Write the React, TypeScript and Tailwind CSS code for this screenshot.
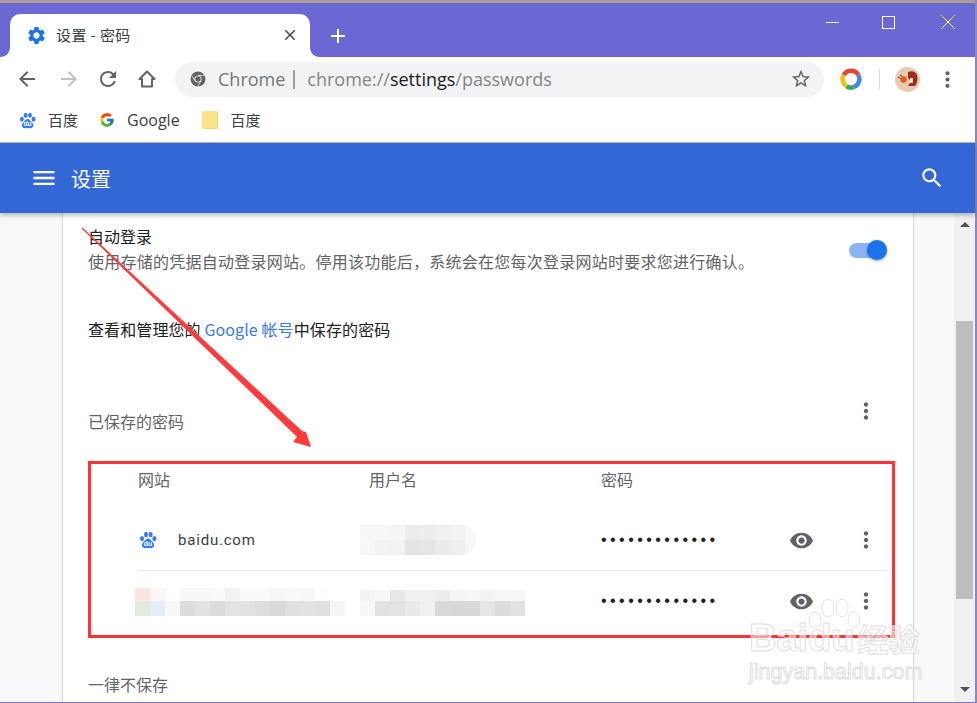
import React from "react";
import {
  MdSettings, MdClose, MdAdd, MdArrowBack, MdArrowForward, MdRefresh,
  MdStarBorder, MdMoreVert, MdMenu, MdSearch, MdVisibility,
} from "react-icons/md";
import { FcGoogle } from "react-icons/fc";

const SANS = "font-['Noto_Sans_CJK_SC','Noto_Sans',sans-serif]";

function Paw({ size = 18 }: { size?: number }) {
  return (
    <svg width={size} height={size} viewBox="0 0 18 18" className="shrink-0">
      <g fill="#2f7cf6">
        <ellipse cx="3" cy="7.6" rx="2" ry="2.6" />
        <ellipse cx="7" cy="3.4" rx="2" ry="2.7" />
        <ellipse cx="11.6" cy="3.4" rx="2" ry="2.7" />
        <ellipse cx="15.4" cy="7.6" rx="2" ry="2.6" />
        <path d="M9 7.4c2 0 3 2 4.2 3.2 1.4 1.3 2.4 2.4 1.7 4.4-.6 1.9-2.6 2.4-4 2.1-1.300-.3-2.500-.3-3.800 0-1.600.3-3.500-.3-4-2.200-.5-1.900.5-3 1.900-4.300C6.200 9.400 7 7.400 9 7.400Z" />
      </g>
      <text x="9" y="15.300" textAnchor="middle" fontSize="7" fontWeight="700" fill="#fff" fontFamily="Liberation Sans, sans-serif">du</text>
    </svg>
  );
}

function Mosaic({ rows, cell, width, height, heights, className }: { rows: string[][]; cell: number; width: number; height: number; heights: number[]; className?: string }) {
  let y = 0;
  return (
    <svg width={width} height={height} className={`block shrink-0 ${className ?? ""}`}>
      {rows.map((r, i) => {
        const top = y;
        y += heights[i];
        return r.map((c, j) => <rect key={`${i}-${j}`} x={j * cell} y={top} width={cell} height={heights[i]} fill={c} />);
      })}
    </svg>
  );
}

const siteMosaic = [
  ["#fbe5e0", "#fdf6f4", "#ffffff", "#f8f8f8", "#f8f8f8", "#fafafa", "#f3f3f3", "#fafafa", "#fafafa", "#f6f6f6", "#f9f9f9", "#f6f6f6", "#fdfdfd", "#ffffff"],
  ["#e3ebdd", "#e4eef8", "#f8f8f8", "#dcdcdc", "#e2e2e2", "#dcdcdc", "#e3e3e3", "#e2e2e2", "#dcdddd", "#d9d9d9", "#e0e0e0", "#e2e2e2", "#e0e0e0", "#f5f5f5"],
];
const userMosaic2 = [
  ["#f3f3f3", "#f7f7f7", "#e7e7e7", "#f0f0f0", "#f0f0f0", "#ededed", "#f5f5f5", "#f7f7f7", "#f3f3f3", "#f6f6f6", "#f8f8f8"],
  ["#f6f6f6", "#e2e2e2", "#e2e3e3", "#e9e9e9", "#f0f0f0", "#d9d9d9", "#d8d8d8", "#d8d8d8", "#e5e5e5", "#dcdcdc", "#e2e2e2"],
];
const userMosaic1 = [
  ["#f7f7f7", "#f7f7f7", "#f5f5f5", "#ececec", "#ededed", "#f0f0f0", "#f3f3f3", "#f8f8f8"],
  ["#f8f8f8", "#f3f3f3", "#f2f2f2", "#e4e4e4", "#e5e5e5", "#ebebeb", "#eeeeee", "#f7f7f7"],
];

function PasswordRow({ site, user }: { site: React.ReactNode; user: React.ReactNode }) {
  return (
    <div className="grid h-[60px] grid-cols-[231px_232px_1fr] items-center">
      <div className="flex items-center">{site}</div>
      <div className="flex items-center">{user}</div>
      <div className="flex items-center">
        <span className="font-['Liberation_Sans',sans-serif] text-[16px] tracking-[3.45px] text-[#202124]">•••••••••••••</span>
        <MdVisibility className="ml-[70px] text-[#5f6368]" size={25} />
        <MdMoreVert className="ml-[39px] text-[#5f6368]" size={26} />
      </div>
    </div>
  );
}

export default function App() {
  return (
    <div className={`relative flex h-[703px] w-[977px] overflow-hidden bg-[#8d86b8] ${SANS}`}>
      <div className="flex w-[975px] flex-col">
        <div className="h-[3px] shrink-0 bg-[#a99d95]" />

        {/* title bar */}
        <div className="flex h-[54px] shrink-0 items-start bg-[#6b68d4] pl-[10px]">
          <div className="relative mt-[11px] flex h-[43px] w-[300px] items-center rounded-t-[10px] bg-white pl-[16px]">
            <svg width="10" height="10" viewBox="0 0 10 10" className="absolute -left-[10px] bottom-0"><path d="M10 0v10H0C6 10 10 6 10 0Z" fill="#fff" /></svg>
            <svg width="10" height="10" viewBox="0 0 10 10" className="absolute -right-[10px] bottom-0"><path d="M0 0v10h10C4 10 0 6 0 0Z" fill="#fff" /></svg>
            <MdSettings className="text-[#1a73e8]" size={21} />
            <span className="ml-[9px] text-[15px] tracking-[0.4px] text-[#3c4043]">设置 - 密码</span>
            <MdClose className="mb-[2px] ml-auto mr-[11px] text-[#45484c]" size={18} />
          </div>
          <MdAdd className="ml-[16px] mt-[21px] text-white" size={24} />
          <div className="ml-auto mr-[19px] mt-[11px] flex h-[16px] items-center">
            <div className="h-px w-[13px] bg-white" />
            <div className="ml-[43px] h-[13px] w-[13px] border border-white" />
            <svg width="16" height="16" viewBox="0 0 16 16" className="ml-[45px]"><path d="M1 1 15 15M15 1 1 15" stroke="#fff" strokeWidth="1" /></svg>
          </div>
        </div>

        {/* toolbar */}
        <div className="flex h-[44px] shrink-0 items-center bg-white pl-[15px]">
          <MdArrowBack className="text-[#5f6368]" size={24} />
          <MdArrowForward className="ml-[18px] text-[#bdc1c6]" size={24} />
          <MdRefresh className="ml-[15px] text-[#5f6368]" size={24} />
          <svg width="24" height="24" viewBox="0 0 24 24" fill="none" stroke="#5f6368" strokeWidth="2" className="ml-[15px] shrink-0">
            <path d="M12 4.500 4.500 12H7v7.500h10V12h2.500Z" strokeLinejoin="round" />
          </svg>
          <div className="ml-[16px] flex h-[35px] w-[649px] items-center rounded-full bg-[#f1f3f4] pl-[15px] pr-[12px] font-['Open_Sans',sans-serif] text-[18px]">
            <svg width="16" height="16" viewBox="0 0 16 16" className="shrink-0">
              <circle cx="8" cy="8" r="7.500" fill="#5f6368" />
              <circle cx="8" cy="8" r="3.600" fill="#f1f3f4" />
              <circle cx="8" cy="8" r="2.700" fill="#5f6368" />
              <path d="M8 4.400h6.500M5 10 1.900 4.800M10.900 10l-3 5.200" stroke="#f1f3f4" strokeWidth="0.800" />
            </svg>
            <span className="ml-[12px] text-[#72767a]">Chrome</span>
            <div className="ml-[8px] h-[19px] w-[2px] bg-[#9aa0a6]" />
            <span className="ml-[12px] text-[#80868b]">chrome://<span className="text-[#202124]">settings</span>/passwords</span>
            <MdStarBorder className="ml-auto text-[#5f6368]" size={22} />
          </div>
          <svg width="22" height="22" viewBox="0 0 22 22" className="ml-[16px] shrink-0" fill="none" strokeWidth="4.500">
            <path d="M3.700 7A8.500 8.500 0 0 1 18.400 7" stroke="#ea4335" />
            <path d="M18.400 7A8.500 8.500 0 0 1 14 18.900" stroke="#4285f4" />
            <path d="M14 18.900A8.500 8.500 0 0 1 6.500 18.400" stroke="#34a853" />
            <path d="M6.500 18.400A8.500 8.500 0 0 1 3.700 7" stroke="#fbbc04" />
          </svg>
          <div className="ml-[17px] h-[21px] w-px bg-[#dadce0]" />
          <svg width="25" height="25" viewBox="0 0 25 25" className="ml-[15px] shrink-0">
            <circle cx="12.500" cy="12.500" r="12.500" fill="#e7cbb0" />
            <path d="M13 5c4-2 8 0 9 3 1 4 0 9-2 11h-7l3-5-3-3Z" fill="#a5281c" />
            <path d="M15 11h3v5h-3Z" fill="#f0e4d8" />
            <circle cx="8.500" cy="12.500" r="3.300" fill="#e8591e" />
            <path d="M3 10l2 1M5 8l2 1" stroke="#5a2a1e" strokeWidth="1" />
          </svg>
          <MdMoreVert className="ml-[15px] text-[#5f6368]" size={25} />
        </div>

        {/* bookmarks */}
        <div className="flex h-[41px] shrink-0 items-start bg-white pl-[19px] text-[15px] text-[#3c4043]">
          <div className="flex h-[38px] items-center">
            <Paw size={17} />
            <span className="ml-[12px]">百度</span>
            <FcGoogle className="ml-[21px]" size={16} />
            <span className="ml-[12px] font-['Open_Sans',sans-serif] text-[16px]">Google</span>
            <div className="ml-[22px] h-[18px] w-[16px] rounded-[2px] border-b border-r border-[#f7d774] bg-[#fee28a]" />
            <span className="ml-[13px]">百度</span>
          </div>
        </div>
        <div className="h-px shrink-0 bg-[#bdbdbd]" />

        {/* settings header */}
        <div className="relative z-10 flex h-[70px] shrink-0 items-center bg-[#3367d6] pl-[30px] pr-[30px] shadow-[0_2px_5px_rgba(0,0,0,0.3)]">
          <MdMenu className="text-white" size={28} />
          <span className="ml-[13px] mt-[1px] text-[20px] text-white">设置</span>
          <MdSearch className="ml-auto text-white" size={26} />
        </div>

        {/* content */}
        <div className="flex min-h-0 flex-1 bg-[#f8f9fa]">
          <div className="w-[954px] min-w-0 pl-[63px]">
            <div className="h-full w-[850px] bg-white pl-[25px] pr-[25px] pt-[11px] shadow-[0_0_2px_rgba(60,64,67,0.5)]">
              <div className="relative">
                <div className="h-[24px] text-[16px] leading-[24px] text-[#202124]">自动登录</div>
                <div className="mt-[1px] h-[24px] whitespace-nowrap text-[16px] leading-[24px] tracking-[0.25px] text-[#5f6368]">使用存储的凭据自动登录网站。停用该功能后，系统会在您每次登录网站时要求您进行确认。</div>
                <div className="absolute right-[1px] top-[16px] h-[20px] w-[38px]">
                  <div className="absolute left-0 top-[3px] h-[15px] w-[35px] rounded-full bg-[#8ab4f8]" />
                  <div className="absolute right-0 top-0 h-[20px] w-[20px] rounded-full bg-[#1a73e8] shadow-[0_1px_3px_rgba(0,0,0,0.4)]" />
                </div>
              </div>
              <div className="mt-[44px] h-[24px] text-[16px] leading-[24px] tracking-[0.1px] text-[#202124]">
                查看和管理您的 <span className="text-[#3b78e7]">Google 帐号</span>中保存的密码
              </div>
              <div className="mt-[56px] flex h-[36px] items-start justify-between">
                <span className="mt-[12px] text-[16px] leading-[24px] text-[#5f6368]">已保存的密码</span>
                <MdMoreVert className="mr-[9px] mt-[1px] text-[#5f6368]" size={26} />
              </div>
              <div className="ml-[50px] mt-[34px]">
                <div className="grid h-[43px] grid-cols-[231px_232px_1fr] items-start text-[16px] leading-[24px] text-[#5f6368]">
                  <span>网站</span>
                  <span>用户名</span>
                  <span>密码</span>
                </div>
                <div className="border-b border-[#e8eaed]">
                  <PasswordRow
                    site={<><div className="ml-px"><Paw size={18} /></div><span className="ml-[21px] font-['Roboto',sans-serif] text-[15px] tracking-[0.8px] text-[#3c4043]">baidu.com</span></>}
                    user={<div className="-ml-[9px]"><Mosaic rows={userMosaic1} cell={15} width={116} height={30} heights={[15, 15]} className="rounded-r-[14px]" /></div>}
                  />
                </div>
                <PasswordRow
                  site={<div className="-ml-[3px] mt-[1px]"><Mosaic rows={siteMosaic} cell={15} width={210} height={28} heights={[13, 15]} /></div>}
                  user={<div className="-ml-[9px] mt-[3px]"><Mosaic rows={userMosaic2} cell={15} width={165} height={26} heights={[11, 15]} /></div>}
                />
              </div>
              <div className="mt-[41px] h-[24px] text-[16px] leading-[24px] text-[#5f6368]">一律不保存</div>
            </div>
          </div>
          <div className="flex w-[21px] flex-col items-center bg-[#f0f0f0]">
            <div className="mt-[9px] h-0 w-0 border-x-[5px] border-b-[5px] border-x-transparent border-b-[#505050]" />
            <div className="mt-[94px] h-[278px] w-[17px] bg-[#bdbdbd]" />
            <div className="mt-[88px] h-0 w-0 border-x-[5px] border-t-[5px] border-x-transparent border-t-[#505050]" />
          </div>
        </div>
        <div className="h-px shrink-0 bg-[#7c79c9]" />
      </div>

      {/* annotations laid over the page */}
      <div className="absolute left-[88px] top-[461px] h-[177px] w-[807px] border-[3px] border-[#ff3333]" />
      <svg width="977" height="703" className="pointer-events-none absolute left-0 top-0">
        <path d="M81.600 228.400 82.400 227.600 302 431 306 432 311 447 293 442 297 437Z" fill="#ff3b3b" />
      </svg>

      {/* watermark */}
      <svg width="80" height="40" viewBox="0 0 80 40" fill="rgba(255,255,255,0.5)" stroke="#e2e2e2" strokeWidth="1" className="pointer-events-none absolute left-[800px] top-[596px]">
        <ellipse cx="28" cy="12" rx="6" ry="9" />
        <ellipse cx="42" cy="12" rx="6" ry="9" />
        <ellipse cx="15" cy="24" rx="6" ry="8" />
        <ellipse cx="54" cy="24" rx="6" ry="8" />
      </svg>
      <div className="pointer-events-none absolute left-[749px] top-[617px] h-[66px] w-[176px] whitespace-nowrap font-['Liberation_Sans',sans-serif] text-white/50 [-webkit-text-stroke:1px_#e0e0e0]">
        <div className="flex h-[42px] items-center">
          <span className="text-[38px] font-bold leading-[42px]">Baidu</span>
          <span className={`ml-[3px] text-[31px] font-bold leading-[42px] ${SANS}`}>经验</span>
        </div>
        <div className="text-[21.500px] leading-[26px]">jingyan.baidu.com</div>
      </div>
    </div>
  );
}
